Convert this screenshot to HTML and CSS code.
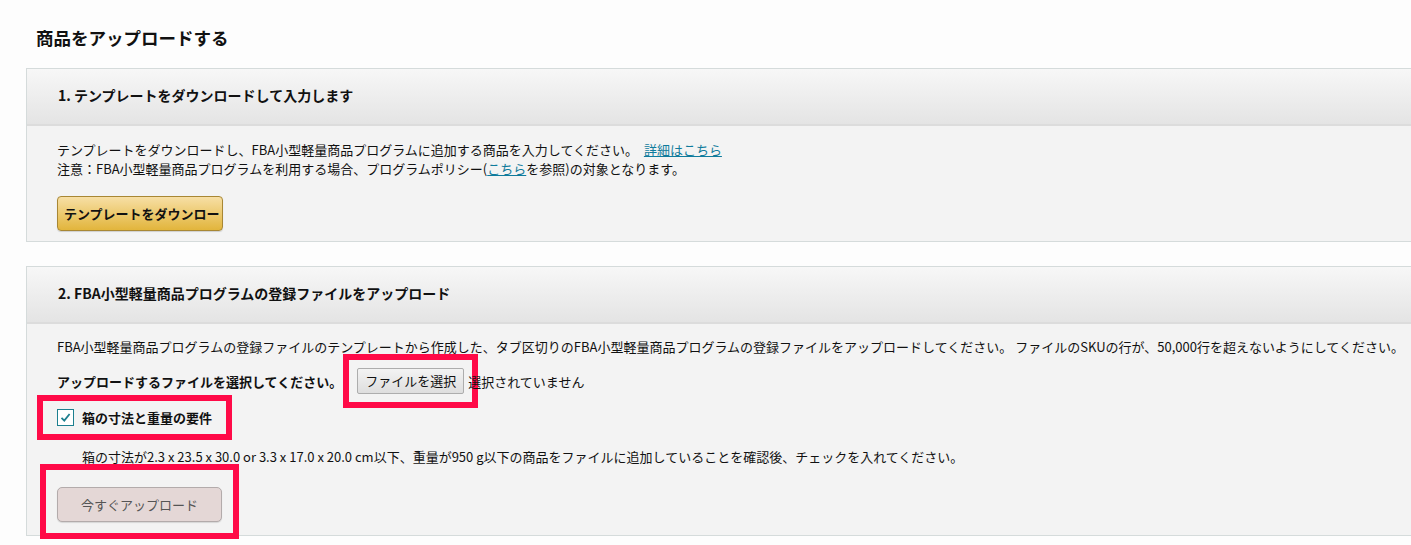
FILE: index.html
```html
<!DOCTYPE html>
<html lang="ja">

<head>
    <meta charset="utf-8">
    <title>商品をアップロードする</title>
    <link rel="stylesheet" href="styles.css">
</head>

<body>
    <div class="page">
        <h1 class="page-title">商品をアップロードする</h1>

        <!-- step 1 -->
        <div class="panel">
            <div class="panel-head">1. テンプレートをダウンロードして入力します</div>
            <div class="panel-body">
                <p class="line">テンプレートをダウンロードし、FBA小型軽量商品プログラムに追加する商品を入力してください。&nbsp; <a href="#">詳細はこちら</a></p>
                <p class="line">注意：FBA小型軽量商品プログラムを利用する場合、プログラムポリシー(<a href="#">こちら</a>を参照)の対象となります。</p>
                <button class="btn-gold">テンプレートをダウンロード</button>
            </div>
        </div>

        <!-- step 2 -->
        <div class="panel">
            <div class="panel-head">2. FBA小型軽量商品プログラムの登録ファイルをアップロード</div>
            <div class="panel-body">
                <p class="line">FBA小型軽量商品プログラムの登録ファイルのテンプレートから作成した、タブ区切りのFBA小型軽量商品プログラムの登録ファイルをアップロードしてください。 ファイルのSKUの行が、50,000行を超えないようにしてください。</p>
                <div class="file-row">
                    <span class="file-label">アップロードするファイルを選択してください。</span>
                    <span class="file-mark mark"><span class="file-btn">ファイルを選択</span></span>
                    <span class="file-none">選択されていません</span>
                </div>
                <label class="check mark">
                    <span class="check-box">
                        <svg width="17" height="17" viewBox="0 0 17 17">
                            <rect x="0.5" y="0.5" width="16" height="16" fill="#fff" stroke="#1c7f8f" />
                            <path d="M4.5 8.8 L7.3 11.6 L12.6 5" fill="none" stroke="#1c7f8f" stroke-width="1.8" />
                        </svg>
                    </span>
                    <span class="check-text">箱の寸法と重量の要件</span>
                </label>
                <p class="line note">箱の寸法が2.3 x 23.5 x 30.0 or 3.3 x 17.0 x 20.0 cm以下、重量が950 g以下の商品をファイルに追加していることを確認後、チェックを入れてください。</p>
                <div class="upload-wrap mark">
                    <button class="btn-upload" disabled>今すぐアップロード</button>
                </div>
            </div>
        </div>
    </div>
</body>

</html>
```

FILE: styles.css
```css
body {
    margin: 0;
    padding: 0;
    background-color: #fdfdfd;
    color: #111;
    font-family: "Noto Sans CJK JP", "Noto Sans", sans-serif;
    font-size: 13px;
    overflow: hidden;
}

.page {
    width: 1440px;
    padding-left: 26px;
}

.page-title {
    margin: 0 0 20px 0;
    padding: 28px 0 0 10px;
    font-size: 17.5px;
    line-height: 20px;
    font-weight: bold;
}

/* panels */
.panel {
    border: 1px solid #d5dbdb;
    border-right: none;
    background-color: #f3f3f3;
    margin-bottom: 24px;
}

.panel-head {
    padding: 16px 31px 19px;
    line-height: 20px;
    font-size: 14px;
    font-weight: bold;
    background: linear-gradient(#f7f7f7, #e4e4e4);
    border-bottom: 2px solid #dcdcdc;
}

.panel-body {
    padding: 14px 30px 10px;
}

.panel:last-child .panel-body {
    padding-top: 13px;
    padding-bottom: 13px;
}

.line {
    margin: 0;
    line-height: 19px;
    white-space: nowrap;
}

.line a {
    color: #0f7b9c;
    text-decoration: underline;
}

.btn-gold {
    display: block;
    margin-top: 18px;
    width: 166px;
    height: 35px;
    padding: 0 6px;
    overflow: hidden;
    white-space: nowrap;
    text-align: left;
    font-family: inherit;
    font-size: 13px;
    font-weight: bold;
    color: #111;
    background: linear-gradient(#f7dfa5, #e2b53c);
    border: 1px solid #a88734;
    border-radius: 4px;
    box-shadow: 0 1px 1px rgba(0, 0, 0, 0.15);
}

/* file row */
.file-row {
    display: flex;
    align-items: center;
    margin-top: 12px;
    height: 26px;
}

.file-label {
    font-weight: bold;
    margin-right: 15px;
}

.file-mark {
    display: flex;
}

.file-btn {
    display: inline-block;
    width: 105px;
    height: 24px;
    line-height: 24px;
    text-align: center;
    background: linear-gradient(#f3f3f3, #dedede);
    border: 1px solid #adadad;
    border-radius: 2px;
}

.file-none {
    margin-left: 4px;
}

/* annotation frames */
.mark {
    outline: 6px solid #ff0a47;
    outline-offset: 8px;
}

.check {
    display: flex;
    align-items: center;
    width: fit-content;
    margin-top: 15px;
    margin-left: -6px;
    padding: 0 6px;
    height: 17px;
}

.check-box {
    display: flex;
    margin-right: 8px;
}

.check-text {
    font-weight: bold;
}

.note {
    margin-top: 21px;
    padding-left: 25px;
}

.upload-wrap {
    width: fit-content;
    margin-top: 15px;
    padding-top: 6px;
    outline-offset: 11px;
}

.btn-upload {
    display: block;
    width: 165px;
    height: 35px;
    font-family: inherit;
    font-size: 13px;
    color: #555;
    background: #e4d7d6;
    border: 1px solid #b3abab;
    border-radius: 5px;
    box-shadow: 0 1px 1px rgba(0, 0, 0, 0.12);
}
```
